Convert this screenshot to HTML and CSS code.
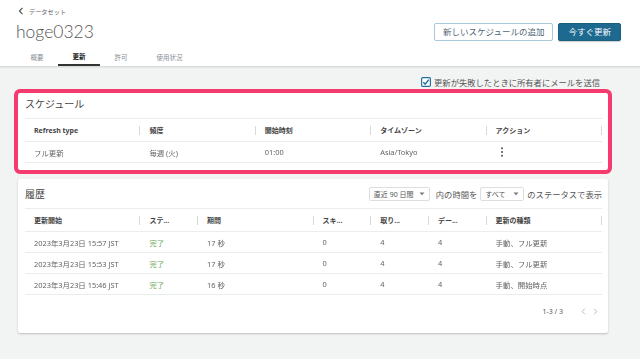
FILE: index.html
```html
<!DOCTYPE html>
<html lang="ja">
<head>
<meta charset="utf-8">
<title>hoge0323</title>
<link rel="stylesheet" href="styles.css">
</head>
<body>
<header class="top">
  <div class="crumb">
    <svg class="crumb-icon" width="6" height="8" viewBox="0 0 6 8"><path d="M4.5 0.8 L1.4 4 L4.5 7.2" fill="none" stroke="#555" stroke-width="1.2"/></svg>
    <span>データセット</span>
  </div>
  <div class="title-row">
    <h1 class="title">hoge0323</h1>
    <div class="actions">
      <button class="btn btn-outline">新しいスケジュールの追加</button>
      <button class="btn btn-primary">今すぐ更新</button>
    </div>
  </div>
  <nav class="tabs">
    <span class="tab">概要</span>
    <span class="tab active">更新</span>
    <span class="tab">許可</span>
    <span class="tab">使用状況</span>
  </nav>
</header>

<main class="content">
  <label class="notify">
    <svg class="check" width="10" height="10" viewBox="0 0 10 10"><rect x="0.6" y="0.6" width="8.8" height="8.8" rx="1.2" fill="#fff" stroke="#1f6e9e" stroke-width="1.2"/><path d="M2.3 5.2 L4.2 7.2 L7.8 2.6" fill="none" stroke="#1f6e9e" stroke-width="1.5"/></svg>
    <span>更新が失敗したときに所有者にメールを送信</span>
  </label>

  <section class="card schedule highlight">
    <h2 class="card-title">スケジュール</h2>
    <div class="grid sched head">
      <div class="th">Refresh type</div>
      <div class="th">頻度</div>
      <div class="th">開始時刻</div>
      <div class="th">タイムゾーン</div>
      <div class="th">アクション</div>
    </div>
    <div class="grid sched row">
      <div class="td">フル更新</div>
      <div class="td">毎週 (火)</div>
      <div class="td">01:00</div>
      <div class="td">Asia/Tokyo</div>
      <div class="td"><svg class="dots" width="10" height="10" viewBox="0 0 10 10"><circle cx="5" cy="1.3" r="1" fill="#555"/><circle cx="5" cy="5" r="1" fill="#555"/><circle cx="5" cy="8.7" r="1" fill="#555"/></svg></div>
    </div>
  </section>

  <section class="card history">
    <div class="hist-top">
      <h2 class="card-title">履歴</h2>
      <div class="filters">
        <span class="select sel-range">直近 90 日間<svg width="6" height="4" viewBox="0 0 6 4"><path d="M0.5 0.5 L3 3.3 L5.5 0.5Z" fill="#777"/></svg></span>
        <span class="ftext first">内の時間を</span>
        <span class="select sel-status">すべて<svg width="6" height="4" viewBox="0 0 6 4"><path d="M0.5 0.5 L3 3.3 L5.5 0.5Z" fill="#777"/></svg></span>
        <span class="ftext">のステータスで表示</span>
      </div>
    </div>
    <div class="grid hist head">
      <div class="th">更新開始</div>
      <div class="th">ステ...</div>
      <div class="th">期間</div>
      <div class="th">スキ...</div>
      <div class="th">取り...</div>
      <div class="th">デー...</div>
      <div class="th">更新の種類</div>
    </div>
    <div class="grid hist row">
      <div class="td">2023年3月23日 15:57 JST</div>
      <div class="td ok">完了</div>
      <div class="td">17 秒</div>
      <div class="td">0</div>
      <div class="td">4</div>
      <div class="td">4</div>
      <div class="td">手動、フル更新</div>
    </div>
    <div class="grid hist row">
      <div class="td">2023年3月23日 15:53 JST</div>
      <div class="td ok">完了</div>
      <div class="td">17 秒</div>
      <div class="td">0</div>
      <div class="td">4</div>
      <div class="td">4</div>
      <div class="td">手動、フル更新</div>
    </div>
    <div class="grid hist row">
      <div class="td">2023年3月23日 15:46 JST</div>
      <div class="td ok">完了</div>
      <div class="td">16 秒</div>
      <div class="td">0</div>
      <div class="td">4</div>
      <div class="td">4</div>
      <div class="td">手動、開始時点</div>
    </div>
    <div class="pager">
      <span class="pager-text">1-3 / 3</span>
      <svg width="5" height="7" viewBox="0 0 5 7"><path d="M3.8 0.8 L1.2 3.5 L3.8 6.2" fill="none" stroke="#bbb" stroke-width="1"/></svg>
      <svg width="5" height="7" viewBox="0 0 5 7"><path d="M1.2 0.8 L3.8 3.5 L1.2 6.2" fill="none" stroke="#bbb" stroke-width="1"/></svg>
    </div>
  </section>
</main>
</body>
</html>
```

FILE: styles.css
```css
* { box-sizing: border-box; }

body {
  margin: 0;
  background: #f2f3f3;
  font-family: "Noto Sans", "Noto Sans CJK JP", sans-serif;
  color: #545b64;
}

.top {
  background: #fff;
  height: 67px;
  padding: 5px 19px 0 16px;
  border-bottom: 1px solid #d9dcdc;
  box-shadow: 0 1px 1px rgba(0,0,0,0.05);
}

.crumb {
  display: flex;
  align-items: center;
  gap: 5px;
  height: 12px;
  padding-left: 2px;
  font-size: 6.2px;
  color: #666;
}

.title-row {
  display: flex;
  justify-content: space-between;
  align-items: center;
  margin-top: 6px;
  height: 18px;
}

.title {
  margin: 0;
  font-family: Lato, "Noto Sans", sans-serif;
  font-size: 17.5px;
  font-weight: 300;
  line-height: 18px;
  color: #555;
}

.actions {
  display: flex;
  gap: 5px;
}

.btn {
  height: 18px;
  font-family: inherit;
  font-size: 8.5px;
  line-height: 16px;
  border-radius: 2px;
  cursor: pointer;
}

.btn-outline {
  background: #fff;
  border: 1px solid #aac8dc;
  color: #4d6679;
  padding: 0 8px;
}

.btn-primary {
  background: #1d6990;
  border: 1px solid #19607f;
  color: #fff;
  padding: 0 9px;
  box-shadow: 0 1px 1px rgba(0,0,0,0.2);
}

.tabs {
  display: flex;
  margin-top: 8px;
  height: 17px;
}

.tab {
  padding: 0 14.5px;
  font-size: 6.5px;
  line-height: 17px;
  color: #8a8f95;
}

.tab.active {
  color: #222;
  font-weight: bold;
  border-bottom: 2px solid #333;
  line-height: 16px;
}

.content {
  padding: 0 32px 20px 18px;
}

.notify {
  display: flex;
  justify-content: flex-end;
  align-items: center;
  gap: 3px;
  margin-top: 10px;
  height: 10px;
  padding-right: 8px;
  font-size: 8.3px;
  color: #555;
}

.card {
  background: #fff;
  border-radius: 2px;
  box-shadow: 0 1px 2px rgba(0,0,0,0.22);
  padding: 0 6px 7px 7px;
}

.schedule {
  margin-top: 6px;
}

.highlight {
  outline: 4px solid #f43a6e;
}

.history {
  margin-top: 9px;
  padding-bottom: 6px;
}

.card-title {
  margin: 0;
  height: 25px;
  line-height: 22px;
  font-size: 10px;
  font-weight: normal;
  color: #444;
}

.grid {
  display: grid;
  align-items: center;
}

.sched {
  grid-template-columns: repeat(5, 1fr);
}

.hist {
  grid-template-columns: 2fr 1fr 2fr 1fr 1fr 1fr 2fr;
}

.grid.head {
  height: 24px;
  border-top: 1px solid #eaeded;
  border-bottom: 1px solid #eaeded;
}

.grid.row {
  height: 21px;
  border-bottom: 1px solid #eaeded;
}

.th {
  height: 9px;
  line-height: 9px;
  padding-left: 9px;
  border-right: 1px solid #d5dbdb;
  font-size: 7px;
  font-weight: bold;
  color: #444;
  white-space: nowrap;
}

.td {
  display: flex;
  align-items: center;
  padding-left: 9px;
  font-size: 7.4px;
  color: #5f6368;
  white-space: nowrap;
}

.td:not(.ok) {
  filter: grayscale(1);
}

.td.ok {
  color: #6aa85a;
}

.dots {
  margin-left: 1px;
}

.hist-top {
  display: flex;
  justify-content: space-between;
  align-items: center;
  height: 29px;
}

.hist-top .card-title {
  height: auto;
  line-height: 16px;
}

.filters {
  display: flex;
  align-items: center;
  gap: 3px;
  font-size: 8.3px;
  color: #555;
}

.ftext.first {
  margin-left: 3px;
}

.select {
  display: flex;
  justify-content: space-between;
  align-items: center;
  height: 14px;
  padding: 0 4px;
  border: 1px solid #dcdfe0;
  border-radius: 2px;
  font-size: 7px;
  color: #555;
  background: #fff;
}

.sel-range { width: 61px; }
.sel-status { width: 44px; }

.pager {
  display: flex;
  justify-content: flex-end;
  align-items: center;
  gap: 7px;
  height: 32px;
  padding-right: 4px;
  font-size: 7px;
  color: #555;
}

.pager-text {
  margin-right: 11px;
}
```
